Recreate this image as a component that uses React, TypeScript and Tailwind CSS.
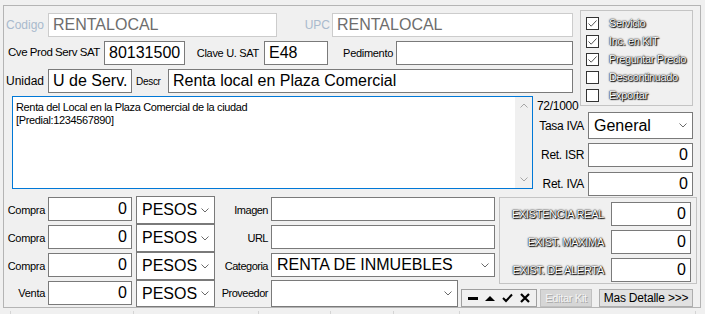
import type { ReactNode } from 'react'

const glow = 'text-white [text-shadow:0_0_2px_#000,1px_1px_1px_#000,0_0_1px_#000]'

function Field({ className = '', children, right = false, dim = false }: { className?: string; children?: ReactNode; right?: boolean; dim?: boolean }) {
  return (
    <div
      className={`bg-white border flex items-center shrink-0 text-[16px] leading-none whitespace-nowrap overflow-hidden ${
        dim ? 'border-[#cccccc] text-[#6d6d6d]' : 'border-[#7a7a7a] text-black'
      } ${right ? 'justify-end pr-[4px]' : 'pl-[4px]'} ${className}`}
    >
      {children}
    </div>
  )
}

function Chevron() {
  return (
    <svg width="8" height="5" viewBox="0 0 8 5" className="shrink-0">
      <path d="M0.5 0.5 L4 4 L7.5 0.5" fill="none" stroke="#6a6a6a" strokeWidth="1" />
    </svg>
  )
}

function Select({ className = '', children }: { className?: string; children?: ReactNode }) {
  return (
    <div className={`bg-white border border-[#7a7a7a] flex items-center justify-between shrink-0 pl-[5px] pr-[5px] text-[16px] leading-none text-black whitespace-nowrap ${className}`}>
      <span>{children}</span>
      <Chevron />
    </div>
  )
}

function Check({ checked, label }: { checked: boolean; label: string }) {
  return (
    <div className="flex items-center h-[18px]">
      <div className="w-[13px] h-[13px] shrink-0 border border-[#333333] bg-white flex items-center justify-center">
        {checked && (
          <svg width="11" height="11" viewBox="0 0 11 11">
            <path d="M1.5 5.5 L4.2 8.2 L9.5 2.5" fill="none" stroke="#555555" strokeWidth="1" />
          </svg>
        )}
      </div>
      <span className={`ml-[10px] text-[11px] tracking-[-0.35px] whitespace-nowrap ${glow}`}>{label}</span>
    </div>
  )
}

const compras = ['Compra', 'Compra', 'Compra', 'Venta']
const extras = ['Imagen', 'URL', 'Categoria', 'Proveedor']

export default function App() {
  return (
    <div className="w-[705px] h-[314px] bg-[#f0f0f0] overflow-hidden font-['Liberation_Sans',Arial,sans-serif] text-black text-[11px]">
      <div className="ml-[3px] mt-[5px] w-[698px] h-[303px] border border-[#b4b4b4] flex flex-col">
        {/* encabezado */}
        <div className="h-[90px] flex">
          <div className="w-[569px] shrink-0 pt-[7px] flex flex-col gap-[4px]">
            <div className="h-[24px] flex items-center">
              <span className="w-[44px] shrink-0 whitespace-nowrap text-right pr-[4px] text-[12px] text-[#a9bacd]">Codigo</span>
              <Field dim className="w-[229px] h-full">RENTALOCAL</Field>
              <span className="w-[55px] shrink-0 whitespace-nowrap text-right pr-[2px] text-[12px] text-[#a9bacd]">UPC</span>
              <Field dim className="w-[241px] h-full">RENTALOCAL</Field>
            </div>
            <div className="h-[24px] flex items-center">
              <span className="w-[100px] shrink-0 whitespace-nowrap pl-[4px] text-[11.5px] tracking-[-0.45px]">Cve Prod Serv SAT</span>
              <Field className="w-[81px] h-full">80131500</Field>
              <span className="w-[79px] shrink-0 whitespace-nowrap text-right pr-[5px] text-[11px] tracking-[-0.3px]">Clave U. SAT</span>
              <Field className="w-[64px] h-full">E48</Field>
              <span className="w-[68px] shrink-0 whitespace-nowrap text-right pr-[3px] text-[11px] tracking-[-0.3px]">Pedimento</span>
              <Field className="w-[177px] h-full" />
            </div>
            <div className="h-[24px] flex items-center">
              <span className="w-[44px] shrink-0 whitespace-nowrap text-right pr-[4px] text-[12px]">Unidad</span>
              <Field className="w-[84px] h-full">U de Serv.</Field>
              <span className="w-[36px] shrink-0 whitespace-nowrap pl-[4px] text-[10px] tracking-[-0.3px]">Descr</span>
              <Field className="w-[405px] h-full">Renta local en Plaza Comercial</Field>
            </div>
          </div>
          <div className="ml-[7px] mt-[4px] w-[113px] h-[96px] shrink-0 border border-[#c4c4c4] pl-[5px] pt-[3px] flex flex-col">
            <Check checked label="Servicio" />
            <Check checked label="Inc. en KIT" />
            <Check checked label="Preguntar Precio" />
            <Check checked={false} label="Descontinuado" />
            <Check checked={false} label="Exportar" />
          </div>
        </div>

        {/* descripcion larga */}
        <div className="h-[100px] flex">
          <div className="ml-[8px] w-[521px] h-[93px] shrink-0 border border-[#0078d7] bg-white flex">
            <div className="flex-1 pl-[3px] pt-[4px] text-[11px] leading-[13px] tracking-[-0.35px]">
              <p>Renta del Local en la Plaza Comercial de la ciudad</p>
              <p>[Predial:1234567890]</p>
            </div>
            <div className="w-[17px] bg-[#f0f0f0] flex flex-col items-center justify-between py-[6px]">
              <svg width="8" height="5" viewBox="0 0 8 5">
                <path d="M0.5 4.5 L4 1 L7.5 4.5" fill="none" stroke="#a6a6a6" />
              </svg>
              <svg width="8" height="5" viewBox="0 0 8 5">
                <path d="M0.5 0.5 L4 4 L7.5 0.5" fill="none" stroke="#a6a6a6" />
              </svg>
            </div>
          </div>
          <div className="w-[160px] flex flex-col">
            <span className="pl-[4px] pt-[4px] h-[16px] text-[12px] leading-[12px] tracking-[-0.3px]">72/1000</span>
            <div className="h-[27px] flex items-center">
              <span className="w-[55px] shrink-0 whitespace-nowrap text-right pr-[4px] text-[12px] tracking-[-0.3px]">Tasa IVA</span>
              <Select className="w-[105px] h-full">General</Select>
            </div>
            <div className="mt-[4px] h-[24px] flex items-center">
              <span className="w-[55px] shrink-0 whitespace-nowrap text-right pr-[4px] text-[12px] tracking-[-0.3px]">Ret. ISR</span>
              <Field right className="w-[105px] h-full">0</Field>
            </div>
            <div className="mt-[5px] h-[24px] flex items-center">
              <span className="w-[55px] shrink-0 whitespace-nowrap text-right pr-[4px] text-[12px] tracking-[-0.3px]">Ret. IVA</span>
              <Field right className="w-[105px] h-full">0</Field>
            </div>
          </div>
        </div>

        {/* precios e inventario */}
        <div className="flex-1 flex">
          <div className="w-[491px] shrink-0 flex flex-col">
            {compras.map((c, i) => (
              <div key={i} className={`${i === 3 ? 'h-[27px]' : 'h-[28px]'} flex`}>
                <span className="w-[41px] shrink-0 whitespace-nowrap self-center text-right text-[11px] tracking-[-0.3px]">{c}</span>
                <Field right className="ml-[3px] mt-[1px] w-[84px] h-[24px]">0</Field>
                <Select className="ml-[4px] w-[79px] h-full">PESOS</Select>
                <span className="w-[54px] shrink-0 whitespace-nowrap self-center text-right pr-[1px] text-[11px] tracking-[-0.5px]">{extras[i]}</span>
                {i < 2 && <Field className="ml-[2px] mt-[1px] w-[224px] h-[24px]" />}
                {i === 2 && <Select className="ml-[2px] mt-[1px] w-[224px] h-[24px]">RENTA DE INMUEBLES</Select>}
                {i === 3 && <Select className="ml-[2px] w-[187px] h-full" />}
              </div>
            ))}
          </div>
          <div className="ml-[4px] w-[198px] flex flex-col">
            <div className="mt-[1px] h-[87px] border border-[#c4c4c4] pt-[4px] flex flex-col gap-[4px]">
              {['EXISTENCIA REAL', 'EXIST. MAXIMA', 'EXIST. DE ALERTA'].map((l) => (
                <div key={l} className="h-[24px] flex items-center">
                  <span className={`w-[106px] shrink-0 whitespace-nowrap text-right pr-[2px] text-[11px] tracking-[-0.3px] ${glow}`}>{l}</span>
                  <Field right className="ml-[5px] w-[80px] h-full">0</Field>
                </div>
              ))}
            </div>
            <div className="mt-[5px] -ml-[38px] h-[18px] flex items-stretch">
              <div className="w-[76px] border border-[#a0a0a0] flex items-center justify-around px-[3px]">
                <svg width="10" height="10" viewBox="0 0 10 10">
                  <rect x="0" y="4" width="10" height="3" fill="#000" />
                </svg>
                <svg width="10" height="10" viewBox="0 0 10 10">
                  <path d="M0 8 L5 3 L10 8 Z" fill="#000" />
                </svg>
                <svg width="11" height="10" viewBox="0 0 11 10">
                  <path d="M1 5 L4 8 L10 1.5" fill="none" stroke="#000" strokeWidth="2" />
                </svg>
                <svg width="10" height="10" viewBox="0 0 10 10">
                  <path d="M1 1 L9 9 M9 1 L1 9" fill="none" stroke="#000" strokeWidth="2.2" />
                </svg>
              </div>
              <div className="ml-[3px] w-[52px] border border-[#c0c0c0] bg-[#d6d6d6] flex items-center justify-center text-[11px] text-[#f4f4f4] [text-shadow:1px_1px_0_#a8a8a8] tracking-[-0.3px]">
                Editar Kit
              </div>
              <div className="ml-[7px] w-[94px] border border-[#adadad] bg-[#e1e1e1] flex items-center justify-center text-[12px] tracking-[-0.2px]">
                Mas Detalle &gt;&gt;&gt;
              </div>
            </div>
          </div>
        </div>
      </div>
      {/* cabecera de la tabla inferior */}
      <div className="mt-[3px] h-[4px] flex">
        <div className="w-[10px]" />
        <div className="w-[123px] border-l border-[#d4d4d4]" />
        <div className="w-[125px] border-l border-[#d4d4d4]" />
        <div className="w-[72px] border-l border-[#d4d4d4]" />
        <div className="w-[63px] border-l border-[#d4d4d4]" />
        <div className="w-[66px] border-l border-[#d4d4d4]" />
        <div className="w-[236px] border-l border-[#d4d4d4]" />
        <div className="w-[4px] border-l border-[#d4d4d4]" />
      </div>
    </div>
  )
}
